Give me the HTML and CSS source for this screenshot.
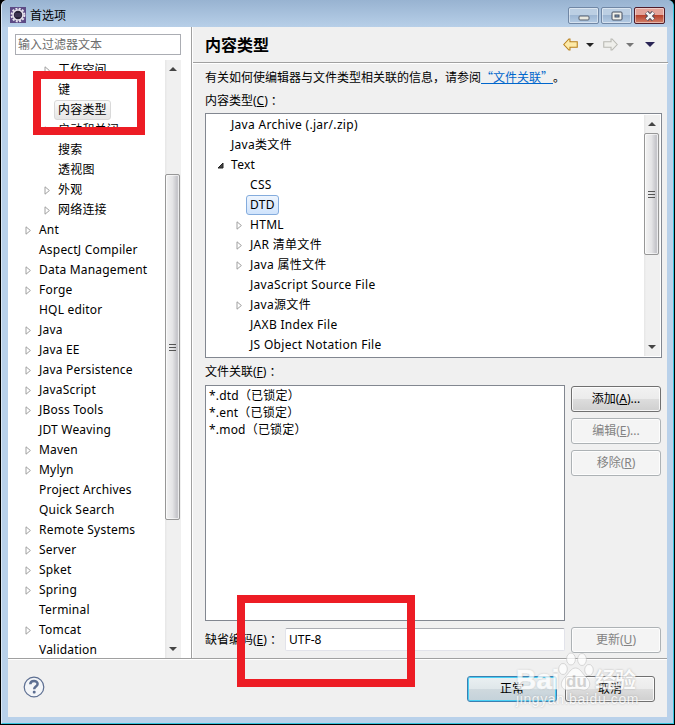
FILE: index.html
```html
<!DOCTYPE html>
<html lang="zh-CN">
<head>
    <meta charset="UTF-8">
    <title>首选项</title>
    <link rel="stylesheet" href="styles.css">
</head>
<body>
    <svg width="0" height="0" class="defs">
        <symbol id="closed" viewBox="0 0 7 9"><path d="M1 .8 L5.4 4.5 L1 8.2 Z" fill="#fff" stroke="#a0a0a0"/></symbol>
        <symbol id="open" viewBox="0 0 7 9"><path d="M6 2 V7 H1 Z" fill="#444" stroke="#222"/></symbol>
        <symbol id="up" viewBox="0 0 8 4"><path d="M0 4 L4 0 L8 4 Z" fill="#444"/></symbol>
        <symbol id="down" viewBox="0 0 8 4"><path d="M0 0 L4 4 L8 0 Z" fill="#444"/></symbol>
        <symbol id="back" viewBox="0 0 14 12"><path d="M.7 6 L5.5 .8 H6.5 V3.5 H13.3 V8.5 H6.5 V11.2 H5.5 Z"/></symbol>
    </svg>
    <div class="window">
        <div class="titlebar">
            <svg class="app-icon" width="16" height="16" viewBox="0 0 16 16">
                <rect width="16" height="16" fill="#5c4a85"/>
                <circle cx="8" cy="8" r="6.4" fill="none" stroke="#e8e4ee" stroke-width="2" stroke-dasharray="2 1.35"/>
                <circle cx="8" cy="8" r="5" fill="#282238" stroke="#e4e0ea" stroke-width="1.6"/>
                <path d="M4.5 7 H11.5 M4.5 9 H11.5" stroke="#54496e"/>
            </svg>
            <span class="title">首选项</span>
            <div class="win-buttons">
                <div class="win-btn"><svg width="12" height="10" viewBox="0 0 12 10"><rect x="1" y="5" width="10" height="4" rx="1" fill="#e8e8e0" stroke="#555f6e"/></svg></div>
                <div class="win-btn"><svg width="12" height="10" viewBox="0 0 12 10"><rect x="1" y="1" width="10" height="8" rx="1" fill="#f0f0ea" stroke="#454f60"/><rect x="4" y="4" width="4" height="2" fill="#7f9fc4" stroke="#454f60"/></svg></div>
                <div class="win-btn close"><svg width="12" height="10" viewBox="0 0 12 10"><path d="M2.5 1.5 L9.5 8.5 M9.5 1.5 L2.5 8.5" stroke="#4b4b58" stroke-width="4.4"/><path d="M2.6 1.6 L9.4 8.4 M9.4 1.6 L2.6 8.4" stroke="#f4f4f4" stroke-width="2.6"/></svg></div>
            </div>
        </div>
        <div class="content">
            <div class="main">
                <div class="sidebar">
                    <div class="filter">输入过滤器文本</div>
                    <div class="tree-wrap">
                        <div class="tree">
                            <div class="row sub"><svg><use href="#closed"/></svg><span>工作空间</span></div>
                            <div class="row sub"><svg></svg><span>键</span></div>
                            <div class="row sub"><svg></svg><span class="inactive">内容类型</span></div>
                            <div class="row sub"><svg><use href="#closed"/></svg><span>启动和关闭</span></div>
                            <div class="row sub"><svg></svg><span>搜索</span></div>
                            <div class="row sub"><svg></svg><span>透视图</span></div>
                            <div class="row sub"><svg><use href="#closed"/></svg><span>外观</span></div>
                            <div class="row sub"><svg><use href="#closed"/></svg><span>网络连接</span></div>
                            <div class="row"><svg><use href="#closed"/></svg><span>Ant</span></div>
                            <div class="row"><svg></svg><span>AspectJ Compiler</span></div>
                            <div class="row"><svg><use href="#closed"/></svg><span>Data Management</span></div>
                            <div class="row"><svg><use href="#closed"/></svg><span>Forge</span></div>
                            <div class="row"><svg></svg><span>HQL editor</span></div>
                            <div class="row"><svg><use href="#closed"/></svg><span>Java</span></div>
                            <div class="row"><svg><use href="#closed"/></svg><span>Java EE</span></div>
                            <div class="row"><svg><use href="#closed"/></svg><span>Java Persistence</span></div>
                            <div class="row"><svg><use href="#closed"/></svg><span>JavaScript</span></div>
                            <div class="row"><svg><use href="#closed"/></svg><span>JBoss Tools</span></div>
                            <div class="row"><svg></svg><span>JDT Weaving</span></div>
                            <div class="row"><svg><use href="#closed"/></svg><span>Maven</span></div>
                            <div class="row"><svg><use href="#closed"/></svg><span>Mylyn</span></div>
                            <div class="row"><svg></svg><span>Project Archives</span></div>
                            <div class="row"><svg></svg><span>Quick Search</span></div>
                            <div class="row"><svg><use href="#closed"/></svg><span>Remote Systems</span></div>
                            <div class="row"><svg><use href="#closed"/></svg><span>Server</span></div>
                            <div class="row"><svg><use href="#closed"/></svg><span>Spket</span></div>
                            <div class="row"><svg><use href="#closed"/></svg><span>Spring</span></div>
                            <div class="row"><svg></svg><span>Terminal</span></div>
                            <div class="row"><svg><use href="#closed"/></svg><span>Tomcat</span></div>
                            <div class="row"><svg></svg><span>Validation</span></div>
                        </div>
                        <div class="scrollbar side-scroll">
                            <svg class="arrow"><use href="#up"/></svg>
                            <div class="thumb"><i></i><i></i><i></i></div>
                            <svg class="arrow last"><use href="#down"/></svg>
                        </div>
                    </div>
                </div>
                <div class="page">
                    <div class="page-head">
                        <h1>内容类型</h1>
                        <div class="nav">
                            <svg class="nav-arrow" width="15" height="13" fill="#fdeaa8" stroke="#b8801c"><use href="#back"/></svg>
                            <svg class="caret" width="8" height="4"><path d="M0 0 H8 L4 4 Z" fill="#222"/></svg>
                            <svg class="nav-arrow forward" width="15" height="13" fill="#efefeb" stroke="#b8b8b2"><use href="#back"/></svg>
                            <svg class="caret" width="8" height="4"><path d="M0 0 H8 L4 4 Z" fill="#777"/></svg>
                            <svg class="caret menu" width="10" height="5"><path d="M0 0 H10 L5 5 Z" fill="#2a2555"/></svg>
                        </div>
                    </div>
                    <div class="page-body">
                        <p class="hint">有关如何使编辑器与文件类型相关联的信息，请参阅<a>“文件关联”</a>。</p>
                        <p class="label">内容类型(<u>C</u>)<span class="colon">：</span></p>
                        <div class="types">
                            <div class="tree">
                                <div class="row"><svg></svg><span>Java Archive (.jar/.zip)</span></div>
                                <div class="row"><svg></svg><span>Java类文件</span></div>
                                <div class="row"><svg><use href="#open"/></svg><span>Text</span></div>
                                <div class="row sub"><svg></svg><span>CSS</span></div>
                                <div class="row sub"><svg></svg><span class="selected">DTD</span></div>
                                <div class="row sub"><svg><use href="#closed"/></svg><span>HTML</span></div>
                                <div class="row sub"><svg><use href="#closed"/></svg><span>JAR 清单文件</span></div>
                                <div class="row sub"><svg><use href="#closed"/></svg><span>Java 属性文件</span></div>
                                <div class="row sub"><svg></svg><span>JavaScript Source File</span></div>
                                <div class="row sub"><svg><use href="#closed"/></svg><span>Java源文件</span></div>
                                <div class="row sub"><svg></svg><span>JAXB Index File</span></div>
                                <div class="row sub"><svg></svg><span>JS Object Notation File</span></div>
                            </div>
                            <div class="scrollbar type-scroll">
                                <svg class="arrow"><use href="#up"/></svg>
                                <div class="thumb"><i></i><i></i><i></i></div>
                                <svg class="arrow last"><use href="#down"/></svg>
                            </div>
                        </div>
                        <p class="label assoc-label">文件关联(<u>F</u>)<span class="colon">：</span></p>
                        <div class="assoc">
                            <div class="list">
                                <div>*.dtd（已锁定）</div>
                                <div>*.ent（已锁定）</div>
                                <div>*.mod（已锁定）</div>
                            </div>
                            <div class="buttons">
                                <div class="btn">添加(<u>A</u>)...</div>
                                <div class="btn disabled">编辑(<u>E</u>)...</div>
                                <div class="btn disabled">移除(<u>R</u>)</div>
                            </div>
                        </div>
                        <div class="encoding">
                            <span class="enc-label">缺省编码(<u>E</u>)<span class="colon">：</span></span>
                            <div class="enc-input">UTF-8</div>
                            <div class="btn disabled">更新(<u>U</u>)</div>
                        </div>
                    </div>
                </div>
            </div>
            <div class="footer">
                <svg class="help" width="22" height="22" viewBox="0 0 22 22">
                    <circle cx="11" cy="11" r="9.8" fill="#f3f5f8" stroke="#5c6e91" stroke-width="1.2"/>
                    <path d="M7.3 8.3 C7.3 3.8 14.7 3.9 14.6 8 C14.6 10.6 11.2 10.6 11.2 13.2" fill="none" stroke="#5c6e91" stroke-width="2.5"/>
                    <rect x="9.8" y="14.8" width="2.8" height="2.8" rx="1" fill="#5c6e91"/>
                </svg>
                <div class="btn default">正常</div>
                <div class="btn">取消</div>
            </div>
        </div>
    </div>
    <div class="mark mark-tree"></div>
    <div class="mark mark-encoding"></div>
    <div class="watermark">
        <div class="wm-logo">
            <span class="wm-bai">Bai</span>
            <svg width="36" height="40" viewBox="0 0 36 40">
                <ellipse cx="5" cy="17" rx="4.3" ry="5.5"/>
                <ellipse cx="13" cy="7" rx="4.4" ry="6"/>
                <ellipse cx="24" cy="7.5" rx="4.4" ry="6"/>
                <ellipse cx="31" cy="18" rx="4.3" ry="5.5"/>
                <path d="M17.5 16 C22 16 24 21 28 25 C35 31 31 39 25 38 C20 37 16 37 11 38 C4 39 0 32 7 25 C11 21 13 16 17.5 16 Z"/>
                <text x="8" y="35">du</text>
            </svg>
            <span class="wm-cn">经验</span>
        </div>
        <div class="wm-url">jingyan.baidu.com</div>
    </div>
</body>
</html>
```
FILE: styles.css
```css
* {
    box-sizing: border-box;
}
body {
    margin: 0;
    width: 675px;
    height: 725px;
    overflow: hidden;
    position: relative;
    background: #000;
    font-family: "Noto Sans", "Noto Sans CJK SC", sans-serif;
    font-size: 12px;
    color: #000;
}
p, h1 {
    margin: 0;
}
.defs {
    position: absolute;
}
.window {
    width: 673px;
    height: 724px;
    margin-left: 1px;
    border: 1px solid #35c4de;
    border-left-color: #dbe8f5;
    border-top: 0;
    border-radius: 6px 6px 0 0;
    background: #b9d1ea;
    padding: 0 6px 6px;
}
.titlebar {
    display: flex;
    height: 27px;
    margin: 0 -6px;
    padding: 0 7px 0 8px;
    background: linear-gradient(#98b3d1, #b7cfe8);
    border-radius: 6px 6px 0 0;
}
.app-icon {
    margin-top: 7px;
}
.title {
    margin-left: 4px;
    line-height: 31px;
}
.win-buttons {
    display: flex;
    gap: 2px;
    margin: 7px 1px 0 auto;
}
.win-btn {
    display: flex;
    align-items: center;
    justify-content: center;
    width: 31px;
    height: 17px;
    border: 1px solid #7087a5;
    border-radius: 2px;
    box-shadow: inset 0 0 0 1px rgba(255, 255, 255, 0.45);
    background: linear-gradient(#bccfe3 45%, #9eb7d3 50%, #b4cbe4);
}
.win-btn.close {
    border-color: #4f1c2a;
    background: linear-gradient(#e3a399 45%, #b8422c 50%, #d2816b);
}
.content {
    height: 690px;
    background: #f0f0f0;
}
.main {
    display: flex;
    height: 632px;
    border-bottom: 1px solid #a0a0a0;
}
.sidebar {
    width: 184px;
    padding: 7px 10px 0 7px;
    background: #fff;
    border-right: 1px solid #a0a0a0;
}
.filter {
    height: 21px;
    width: 166px;
    padding-left: 2px;
    border: 1px solid #abadb3;
    line-height: 19px;
    color: #6d6d6d;
}
.tree-wrap {
    display: flex;
    height: 598px;
    margin-top: 5px;
    overflow: hidden;
}
.tree {
    flex: 1;
    overflow: hidden;
}
.sidebar .tree {
    padding-left: 10px;
    letter-spacing: 0.2px;
}
.row {
    display: flex;
    align-items: center;
    height: 20px;
    white-space: nowrap;
}
.row.sub {
    padding-left: 19px;
}
.row svg {
    width: 7px;
    height: 9px;
    margin-right: 3px;
}
.row span {
    height: 20px;
    line-height: 18px;
    padding: 0 3px;
    border: 1px solid transparent;
    border-radius: 3px;
}
.row .selected {
    border-color: #84acdd;
    background: linear-gradient(#eef5fe, #cfe3fc);
}
.row .inactive {
    border-color: #d9d9d9;
    background: linear-gradient(#fafafa, #e6e6e6);
}
.scrollbar {
    display: flex;
    flex-direction: column;
    align-items: center;
    width: 16px;
    background: linear-gradient(90deg, #e6e6e6, #f0f0f0 15%, #f0f0f0);
}
.arrow {
    width: 8px;
    height: 4px;
    margin-top: 7px;
}
.arrow.last {
    margin: auto 0 7px;
}
.thumb {
    display: flex;
    flex-direction: column;
    align-items: center;
    justify-content: center;
    gap: 2px;
    width: 15px;
    margin-right: 1px;
    border: 1px solid #979797;
    border-radius: 2px;
    box-shadow: inset 0 0 0 1px rgba(255, 255, 255, 0.6);
    background: linear-gradient(90deg, #f3f3f3, #e4e4e6 50%, #c4c4c9 85%, #d2d2d6);
}
.thumb i {
    width: 7px;
    height: 1px;
    background: #555;
}
.side-scroll .thumb {
    height: 346px;
    margin-top: 103px;
}
.page {
    flex: 1;
    border-left: 1px solid #fff;
}
.page-head {
    display: flex;
    height: 36px;
    padding: 0 13px 0 12px;
    border-bottom: 1px solid #a0a0a0;
    box-shadow: 0 1px #fff;
}
h1 {
    font-size: 16px;
    line-height: 36px;
}
.nav {
    display: flex;
    align-items: center;
    margin-left: auto;
}
.caret {
    margin-left: 8px;
}
.forward {
    transform: scaleX(-1);
    margin-left: 9px;
}
.menu {
    margin-left: 11px;
}
.page-body {
    padding: 4px 6px 0 12px;
}
.hint, .label {
    height: 23px;
    line-height: 22px;
    white-space: nowrap;
}
.hint a {
    display: inline-block;
    width: 72px;
    height: 14px;
    border-bottom: 1px solid #0066cc;
    font-family: "Noto Sans CJK SC", sans-serif;
    line-height: 13px;
    color: #0066cc;
}
.colon {
    margin-left: 3px;
}
.types {
    display: flex;
    width: 457px;
    height: 245px;
    border: 1px solid #828790;
    background: #fff;
    padding: 1px;
}
.types .tree {
    padding-left: 10px;
    letter-spacing: 0.3px;
}
.type-scroll {
    height: 241px;
}
.type-scroll .thumb {
    height: 122px;
    margin-top: 7px;
}
.assoc-label {
    height: 27px;
    line-height: 28px;
}
.assoc {
    display: flex;
    gap: 6px;
}
.list {
    width: 360px;
    height: 236px;
    padding: 1px 3px;
    border: 1px solid #828790;
    background: #fff;
    line-height: 17px;
    letter-spacing: 0.2px;
}
.buttons {
    display: flex;
    flex-direction: column;
    gap: 6px;
    padding-top: 1px;
}
.btn {
    width: 90px;
    height: 26px;
    border: 1px solid #707070;
    border-radius: 3px;
    box-shadow: inset 0 0 0 1px rgba(255, 255, 255, 0.8);
    background: linear-gradient(#f2f2f2, #ebebeb 49%, #dddddd 50%, #cfcfcf);
    line-height: 24px;
    text-align: center;
}
.btn.disabled {
    border-color: #adb2b5;
    background: #f4f4f4;
    color: #838383;
}
.btn.default {
    border-color: #3c7fb1;
    box-shadow: inset 0 0 0 1px #48d0f5;
    background: linear-gradient(#eaf0f2, #dfe7ea 49%, #cfd9de 50%, #c4d2da);
}
.encoding {
    display: flex;
    margin-top: 6px;
}
.enc-label {
    width: 80px;
    line-height: 25px;
    white-space: nowrap;
}
.enc-input {
    width: 280px;
    height: 23px;
    margin: 1px 6px 0 0;
    padding-left: 3px;
    border: 1px solid #e2e3ea;
    border-top-color: #abadb3;
    border-radius: 2px;
    background: #fff;
    line-height: 21px;
}
.footer {
    display: flex;
    gap: 8px;
    height: 58px;
    padding: 16px 12px 0 15px;
    border-top: 1px solid #fff;
}
.help {
    margin: 0 auto 0 0;
}
/* red highlight frames */
.mark {
    position: absolute;
    border: 8px solid #ed1c24;
}
.mark-tree {
    left: 33px;
    top: 71px;
    width: 112px;
    height: 64px;
}
.mark-encoding {
    left: 237px;
    top: 595px;
    width: 178px;
    height: 92px;
}
.watermark {
    position: absolute;
    left: 516px;
    top: 652px;
    width: 124px;
    opacity: 0.75;
    color: #fff;
    text-shadow: 0 0 2px #999;
}
.wm-logo {
    display: flex;
    height: 40px;
}
.wm-logo svg {
    flex: none;
    fill: #fff;
    stroke: #bbb;
    stroke-width: 0.7;
    margin-right: 1px;
}
.wm-logo text {
    font: bold 17px "Liberation Sans", sans-serif;
    fill: #c8c8c8;
    stroke: none;
    text-shadow: none;
}
.wm-bai {
    width: 42px;
    font: bold 28px/56px "Liberation Sans", sans-serif;
    -webkit-text-stroke: 0.6px #fff;
}
.wm-cn {
    font-size: 21px;
    font-weight: bold;
    line-height: 54px;
    letter-spacing: -1px;
    white-space: nowrap;
}
.wm-url {
    font: 14px/14px "Liberation Sans", sans-serif;
    letter-spacing: 0.6px;
}
```
